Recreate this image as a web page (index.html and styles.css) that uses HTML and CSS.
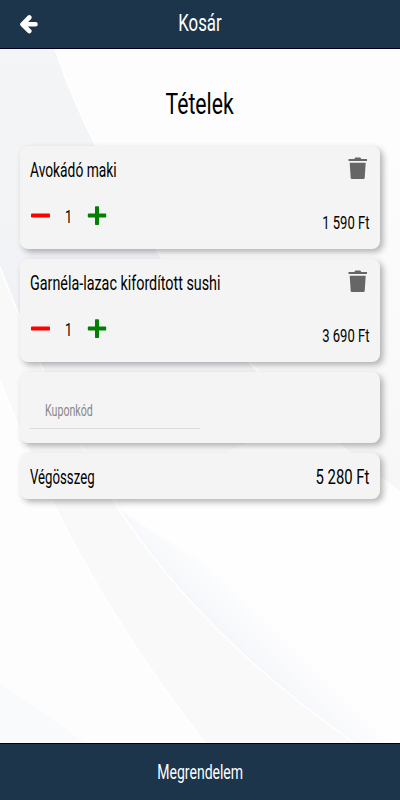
FILE: index.html
```html
<!DOCTYPE html>
<html lang="hu">
<head>
    <meta charset="UTF-8">
    <meta name="viewport" content="width=device-width, initial-scale=1.0">
    <title>Kosár</title>
    <link rel="stylesheet" href="styles.css">
</head>
<body>
    <!-- header -->
    <header class="header">
        <a class="back" href="#" aria-label="Vissza">
            <svg width="20" height="20" viewBox="0 0 20 20">
                <path d="M10.300 3.500 L3.500 10.300 L10.300 17.100 M4 10.300 H16.500" fill="none" stroke="#fff" stroke-width="4.600" stroke-linecap="round" stroke-linejoin="round"/>
            </svg>
        </a>
        <span class="header-title">Kosár</span>
    </header>

    <main class="content">
        <h1 class="title"><span>Tételek</span></h1>

        <!-- cart items -->
        <div class="card item">
            <div class="row">
                <span class="name name-short">Avokádó maki</span>
                <svg class="trash" width="20" height="24" viewBox="0 0 20 24">
                    <path d="M.5 3h5.800l1-1.500h5l1 1.500h5.700v2H.5zM1.700 6.800h16l-1 15.200q-.1 1-1.200 1H3.900q-1.100 0-1.200-1z" fill="#666"/>
                </svg>
            </div>
            <div class="row bottom">
                <div class="counter">
                    <svg width="20" height="20" viewBox="0 0 20 20"><rect x="1" y="7.500" width="19" height="4" rx=".8" fill="red"/></svg>
                    <span class="count">1</span>
                    <svg width="20" height="20" viewBox="0 0 20 20"><path d="M8 1q0-.7.700-.7h2.600q.7 0 .7.700V7.500h6.500q.7 0 .7.700v2.600q0 .7-.7.700H12v6.700q0 .7-.7.700H8.700q-.7 0-.7-.7V11.500H1.500q-.7 0-.7-.7V8.200q0-.7.700-.7h6.500z" fill="green"/></svg>
                </div>
                <span class="price">1 590 Ft</span>
            </div>
        </div>

        <div class="card item">
            <div class="row">
                <span class="name">Garnéla-lazac kifordított sushi</span>
                <svg class="trash" width="20" height="24" viewBox="0 0 20 24">
                    <path d="M.5 3h5.800l1-1.500h5l1 1.500h5.700v2H.5zM1.700 6.800h16l-1 15.200q-.1 1-1.200 1H3.900q-1.100 0-1.200-1z" fill="#666"/>
                </svg>
            </div>
            <div class="row bottom">
                <div class="counter">
                    <svg width="20" height="20" viewBox="0 0 20 20"><rect x="1" y="7.500" width="19" height="4" rx=".8" fill="red"/></svg>
                    <span class="count">1</span>
                    <svg width="20" height="20" viewBox="0 0 20 20"><path d="M8 1q0-.7.700-.7h2.600q.7 0 .7.700V7.500h6.500q.7 0 .7.700v2.600q0 .7-.7.700H12v6.700q0 .7-.7.700H8.700q-.7 0-.7-.7V11.500H1.500q-.7 0-.7-.7V8.200q0-.7.700-.7h6.500z" fill="green"/></svg>
                </div>
                <span class="price">3 690 Ft</span>
            </div>
        </div>

        <!-- coupon -->
        <div class="card coupon">
            <div class="coupon-field"><span>Kuponkód</span></div>
        </div>

        <!-- total -->
        <div class="card total">
            <span class="total-label">Végösszeg</span>
            <span class="total-price">5 280 Ft</span>
        </div>
    </main>

    <footer class="footer">
        <span>Megrendelem</span>
    </footer>
</body>
</html>
```
FILE: styles.css
```css
* {
    margin: 0;
    padding: 0;
    box-sizing: border-box;
}

body {
    height: 100vh;
    display: flex;
    flex-direction: column;
    overflow: hidden;
    font-family: Roboto, "Liberation Sans", sans-serif;
    color: #000;
}

/* narrow letters */
span {
    display: inline-block;
    white-space: nowrap;
    transform: scaleX(0.72);
}

.header {
    height: 49px;
    padding: 0 19px;
    display: grid;
    grid-template-columns: 20px 1fr 20px;
    align-items: center;
    background-color: #1c354a;
    border-bottom: 1px solid #000022;
    color: #fff;
}

.back {
    height: 20px;
}

.header-title {
    font-size: 24px;
    line-height: 46px;
    text-align: center;
    padding-bottom: 2px;
    transform: scaleX(0.7);
}

.content {
    flex: 1;
    padding: 0 20px;
    display: flex;
    flex-direction: column;
    gap: 10px;
    /* curved paper-like background */
    background: #fdfdfd url("data:image/svg+xml,%3Csvg xmlns='http://www.w3.org/2000/svg' width='400' height='694' viewBox='0 49 400 694'%3E%3Cdefs%3E%3ClinearGradient id='a' gradientUnits='userSpaceOnUse' x1='0' y1='50' x2='0' y2='500'%3E%3Cstop offset='0' stop-color='%23f4f5f6'/%3E%3Cstop offset='.6' stop-color='%23f1f2f5'/%3E%3Cstop offset='1' stop-color='%23fcfdfe'/%3E%3C/linearGradient%3E%3ClinearGradient id='b' gradientUnits='userSpaceOnUse' x1='225' y1='640' x2='258' y2='607'%3E%3Cstop offset='0' stop-color='%23f4f6fa'/%3E%3Cstop offset='1' stop-color='%23fefefe'/%3E%3C/linearGradient%3E%3ClinearGradient id='c' gradientUnits='userSpaceOnUse' x1='0' y1='150' x2='0' y2='480'%3E%3Cstop offset='0' stop-color='%23f7f7f7' stop-opacity='0'/%3E%3Cstop offset='1' stop-color='%23f7f7f7'/%3E%3C/linearGradient%3E%3C/defs%3E%3Cpath d='M0 49H55Q89 150 160 255Q244 375 400 492V743H0z' fill='%23fefefe'/%3E%3Cpath d='M0 49H55Q89 150 160 255Q225 345 300 415L118 508Q55 410 0 267z' fill='url(%23a)'/%3E%3Cpath d='M160 150H400V492Q244 375 160 255z' fill='url(%23c)'/%3E%3Cpath d='M55 49Q89 150 160 255Q244 375 400 492' fill='none' stroke='white' stroke-width='1.500'/%3E%3Cpath d='M118 508Q235 590 400 660V743H355Q205 640 118 508z' fill='url(%23b)'/%3E%3Cpath d='M0 267Q50 400 118 508Q205 640 355 743H0z' fill='%23f9f9f9'/%3E%3Cpath d='M0 380Q70 570 205 743H0z' fill='%23fdfdfd'/%3E%3Cpath d='M0 380Q70 570 205 743M0 267Q50 400 118 508Q205 640 355 743' fill='none' stroke='white' stroke-width='1.500'/%3E%3Cpath d='M0 683Q45 714 85 743H0z' fill='%23f9fafb'/%3E%3C/svg%3E") no-repeat;
}

.title {
    height: 87px;
    padding-top: 33px;
    font-size: 29px;
    font-weight: 400;
    line-height: 44px;
    text-align: center;
}

.title span {
    transform: scaleX(0.73);
}

.card {
    background-color: #f4f4f4;
    border-radius: 8px;
    box-shadow: 3px 3px 6px rgba(0, 0, 0, 0.3);
    padding: 0 10px;
}

.item {
    height: 103px;
    padding-top: 10px;
}

.row {
    display: flex;
    justify-content: space-between;
}

.name {
    font-size: 20px;
    line-height: 28px;
    transform: scaleX(0.717);
    transform-origin: left;
}

.name-short {
    transform: scaleX(0.69);
}

.trash {
    margin-right: 2px;
}

.bottom {
    height: 54px;
    padding-top: 22px;
}

.counter {
    display: flex;
}

.count {
    width: 37px;
    text-align: center;
    font-size: 17.5px;
    line-height: 23px;
}

.price {
    margin-right: 1px;
    font-size: 17.5px;
    line-height: 34px;
    transform: scaleX(0.745);
    transform-origin: right;
}

.coupon {
    height: 71px;
    padding-top: 20px;
}

.coupon-field {
    width: 170px;
    height: 37px;
    padding-left: 15px;
    border-bottom: 1px solid #dcdcdc;
    color: #888;
    font-size: 16.5px;
    line-height: 37px;
}

.coupon-field span {
    transform: scaleX(0.645);
    transform-origin: left;
}

.total {
    height: 46px;
    display: flex;
    justify-content: space-between;
    font-size: 20px;
    line-height: 48px;
}

.total-label {
    transform: scaleX(0.66);
    transform-origin: left;
}

.total-price {
    margin-right: 1px;
    transform: scaleX(0.745);
    transform-origin: right;
}

.footer {
    height: 57px;
    background-color: #1c354a;
    border-top: 1px solid #000;
    color: #fff;
    font-size: 20px;
    line-height: 57px;
    text-align: center;
}

.footer span {
    transform: scaleX(0.7);
}
```
